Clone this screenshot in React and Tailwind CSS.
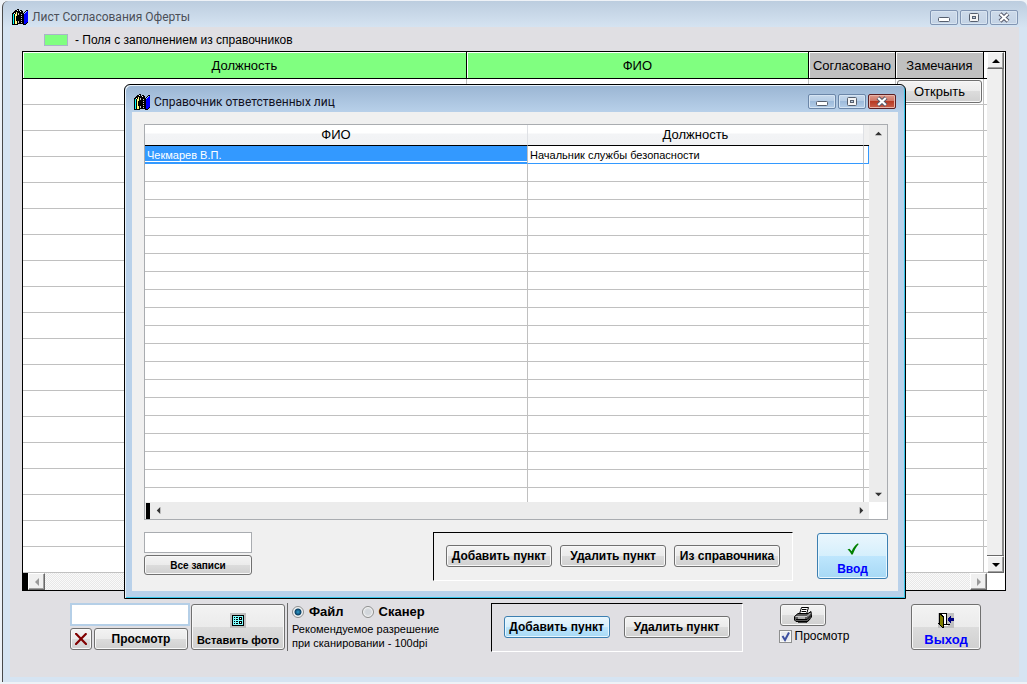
import React from "react";

const FACE =
  "border border-[#707070] rounded-[3px] bg-[linear-gradient(#f3f3f3,#ebebeb_50%,#dcdcdc_50%,#d0d0d0)] shadow-[inset_0_0_0_1px_#f8f8f8]";
const FACE_BLUE =
  "border border-[#3c7fb1] rounded-[3px] bg-[linear-gradient(#eaf6fd,#d5effc_50%,#bee6fd_50%,#a7d9f5)] shadow-[inset_0_0_0_1px_#e8f7ff]";

function Button({ blue, className, children, ...rest }) {
  return (
    <button type="button" className={`flex items-center justify-center whitespace-nowrap ${blue ? FACE_BLUE : FACE} ${className}`} {...rest}>
      {children}
    </button>
  );
}

function BooksIcon() {
  return (
    <svg viewBox="0 0 16 16" className="h-4 w-4 shrink-0" shapeRendering="crispEdges" aria-hidden="true">
      <path fill="#000" d="M0 4h1V3h1V2h1V1h2V0h2v2h1V1h2v1h1v2h1V3h1V2h1V1h2v13h-1v1h-1v1h-3v-1H6v1H0z" />
      <path fill="#00ffff" d="M1 5h1v10H1z" />
      <path fill="#fff" d="M2 4h1v1H2zM5 1h1v1H5zM8 2h1v1H8z" />
      <path fill="#ffff80" d="M3 5h1v10H3zM4 3h1v4H4zM4 12h1v3H4z" />
      <path fill="#c8c8c8" d="M6 4h1v2H6zM6 12h1v2H6zM9 5h1v1H9zM9 7h1v1H9zM9 9h1v1H9zM9 11h1v1H9zM9 13h1v1H9z" />
      <path fill="#0000ff" d="M12 5h1V4h1V3h1v11h-1v1h-2z" />
      <path fill="#0000ff" d="M15 2h1v11h-1z" />
      <path fill="#a0c8ff" d="M12 4h1V3h1V2h1v1h-1v1h-1v1h-1z" />
    </svg>
  );
}

function CaptionButton({ kind, dialog }) {
  const tone =
    kind === "close" && dialog
      ? "border-[#5b1f24] bg-[linear-gradient(#dd9a8c,#cf7565_45%,#b83a24_50%,#c9604c)] shadow-[inset_0_0_0_1px_#e8b5aa]"
      : dialog
        ? "border-[#6b86a8] bg-[linear-gradient(#c7d9ec,#b6cde6_45%,#9ebbdb_50%,#b4cee9)] shadow-[inset_0_0_0_1px_#d5e4f3]"
        : "border-[#8195b3] bg-[linear-gradient(#cddaea,#c3d3e5)] shadow-[inset_0_0_0_1px_#d8e4f0]";
  const names = { min: "Свернуть", max: "Развернуть", close: "Закрыть" };
  return (
    <button type="button" aria-label={names[kind]} className={`flex h-[15px] w-7 items-center justify-center rounded-[2px] border ${tone}`}>
      <svg viewBox="0 0 12 11" className="h-[11px] w-3" aria-hidden="true">
        {kind === "min" && <rect x="0.5" y="5.5" width="11" height="4" rx="1" fill="#fff" stroke="#565f6e" />}
        {kind === "max" && (
          <>
            <rect x="1.5" y="1.5" width="9" height="8" rx="1" fill="#f4f4f4" stroke="#565f6e" />
            <rect x="4.5" y="4.5" width="3" height="2" fill="#b9cade" stroke="#565f6e" />
          </>
        )}
        {kind === "close" && (
          <>
            <path d="M2 1.800l8 7.400M10 1.800l-8 7.400" stroke="#565a6b" strokeWidth="4.200" />
            <path d="M2.200 2l7.600 7M9.800 2l-7.600 7" stroke="#fff" strokeWidth="2.200" />
          </>
        )}
      </svg>
    </button>
  );
}

function Caption({ title, dialog }) {
  return (
    <header className="flex items-center">
      <BooksIcon />
      <h1 className={`ml-1 flex-1 font-[Roboto,'Noto_Sans',sans-serif] text-xs ${dialog ? "text-[#111122]" : "text-[#4c5058]"}`}>{title}</h1>
      <div className="flex gap-0.5">
        <CaptionButton kind="min" dialog={dialog} />
        <CaptionButton kind="max" dialog={dialog} />
        <CaptionButton kind="close" dialog={dialog} />
      </div>
    </header>
  );
}

const ARROWS = {
  up: "M0 6h8L4 2z",
  down: "M0 2h8L4 6z",
  left: "M6 0v8L2 4z",
  right: "M2 0v8l4-4z",
};

function ScrollButton({ dir, classic, muted }) {
  const labels = { up: "Вверх", down: "Вниз", left: "Влево", right: "Вправо" };
  return (
    <button
      type="button"
      aria-label={labels[dir]}
      className={`flex shrink-0 items-center justify-center ${
        classic
          ? "h-[17px] w-[17px] border border-t-white border-l-white border-r-[#696969] border-b-[#696969] bg-[#f0f0f0] shadow-[inset_-1px_-1px_0_#a0a0a0]"
          : "h-4 w-4"
      }`}
    >
      <svg viewBox="0 0 8 8" className={classic ? "h-2 w-2" : "h-[7px] w-[7px]"} aria-hidden="true">
        <path d={ARROWS[dir]} fill={muted ? "#9a9a9a" : classic ? "#000" : "#333"} />
      </svg>
    </button>
  );
}

function SheetTable() {
  const head = "h-[27px] border-b border-r border-black p-0 pt-px text-center font-normal shadow-[inset_1px_1px_0_#fff]";
  const cell = "border-b border-r border-[#c0c0c0] p-0";
  return (
    <section className="border border-black bg-white">
      <div className="flex">
        <table className="flex-1 table-fixed border-separate border-spacing-0 text-[13px]">
          <colgroup>
            <col />
            <col className="w-[35.5%]" />
            <col className="w-[87px]" />
            <col className="w-[88px]" />
            <col className="w-[3px]" />
          </colgroup>
          <thead>
            <tr>
              <th className={`${head} bg-[#80ff80]`}>Должность</th>
              <th className={`${head} bg-[#80ff80]`}>ФИО</th>
              <th className={`${head} bg-[#c0c0c0]`}>Согласовано</th>
              <th className={`${head} bg-[#c0c0c0]`}>Замечания</th>
              <td className="border-b border-black p-0" />
            </tr>
          </thead>
          <tbody>
            {Array.from({ length: 19 }, (_, i) => (
              <tr key={i} className="h-[26px]">
                <td className={cell} />
                <td className={cell} />
                <td className={cell} />
                <td className={cell}>
                  {i === 0 && <Button className="ml-px h-[23px] w-[85px]">Открыть</Button>}
                </td>
                <td className="border-b border-[#c0c0c0] p-0" />
              </tr>
            ))}
          </tbody>
        </table>
        <div className="mr-px flex w-[17px] flex-col bg-[#efefef]">
          <ScrollButton dir="up" classic />
          <div className="flex-1 border-r-2 border-[#8a8a8a]" />
          <div className="h-px bg-[#696969]" />
          <ScrollButton dir="down" classic />
        </div>
      </div>
      <div className="flex h-[17px]">
        <div className="w-[5px] bg-black" />
        <ScrollButton dir="left" classic muted />
        <div className="flex-1 bg-[repeating-conic-gradient(#e8e8e8_0_25%,#fafafa_0_50%)] bg-[length:2px_2px]" />
        <ScrollButton dir="right" classic muted />
        <div className="w-[18px]" />
      </div>
    </section>
  );
}

function DirectoryTable() {
  const head = "h-[21px] border-b border-b-black p-0 text-center font-normal leading-5 bg-[linear-gradient(#ffffff_40%,#f3f4f6_45%,#f1f2f4)]";
  const line = "border-b border-[#c0c0c0] p-0";
  return (
    <section className="border border-[#a9acb0] bg-white">
      <div className="flex">
        <table className="flex-1 table-fixed border-separate border-spacing-0">
          <colgroup>
            <col className="w-[52.9%]" />
            <col />
            <col className="w-[5px]" />
          </colgroup>
          <thead className="text-[13px]">
            <tr>
              <th className={`${head} border-r border-r-[#dfe1e5]`}>ФИО</th>
              <th className={`${head} border-r border-r-[#dfe1e5]`}>Должность</th>
              <td className="border-b border-black bg-[#f0f0f0] p-0" />
            </tr>
          </thead>
          <tbody className="text-[11px] leading-4">
            <tr className="h-[18px]">
              <td className="border-b border-r border-r-[#c0c0c0] border-b-[#3399ff] bg-[#3399ff] p-0 pl-0.5 text-white shadow-[inset_0_-1px_0_#3399ff,inset_0_-2px_0_#fff]">Чекмарев В.П.</td>
              <td className="border-b border-r border-r-[#c0c0c0] border-b-[#3399ff] p-0 pl-0.5">Начальник службы безопасности</td>
              <td className="border-b border-r border-[#3399ff] p-0" />
            </tr>
            {Array.from({ length: 18 }, (_, i) => (
              <tr key={i} className="h-[18px]">
                <td className={`${line} border-r`} />
                <td className={`${line} border-r`} />
                <td className={line} />
              </tr>
            ))}
            <tr className="h-[14px]">
              <td className="border-r border-[#c0c0c0] p-0" />
              <td className="border-r border-[#c0c0c0] p-0" />
              <td className="p-0" />
            </tr>
          </tbody>
        </table>
        <div className="flex w-[18px] flex-col items-center justify-between bg-[#ececec]">
          <ScrollButton dir="up" />
          <ScrollButton dir="down" />
        </div>
      </div>
      <div className="flex h-[17px] items-center bg-[#ececec]">
        <div className="ml-px h-4 w-1 bg-black" />
        <ScrollButton dir="left" />
        <div className="flex-1" />
        <ScrollButton dir="right" />
        <div className="h-full w-[18px] bg-white" />
      </div>
    </section>
  );
}

function Group({ className, children }) {
  return (
    <div className={`flex h-[49px] items-start border border-t-black border-l-black border-r-white border-b-white px-3 pt-3 ${className}`}>
      {children}
    </div>
  );
}

const ITEM = "h-[22px] w-[106px] text-xs font-bold";

function DirectoryDialog() {
  return (
    <div
      role="dialog"
      aria-label="Справочник ответственных лиц"
      className="absolute left-[124px] right-[121px] top-[84px] rounded-t-[6px] border border-black bg-[linear-gradient(#9ab5d3,#b9d1ea_28px)] px-[7px] pb-[7px] shadow-[inset_1px_1px_0_#eaf3fb,inset_-1px_-1px_0_#35c4e8]"
    >
      <div className="flex h-[27px] flex-col justify-center pl-0.5 pr-0.5 pt-1.5">
        <Caption title="Справочник ответственных лиц" dialog />
      </div>
      <div className="bg-[#f0f0f0] pb-2.5 pl-3 pr-2.5 pt-3">
        <DirectoryTable />
        <div className="mt-3 flex items-start">
          <div className="flex w-[108px] flex-col gap-0.5">
            <input type="text" aria-label="Поиск" className="h-[21px] w-full border border-[#a9acb0] bg-white px-1 text-[11px]" />
            <Button className="h-5 w-full text-[10px] font-bold">Все записи</Button>
          </div>
          <div className="flex-1" />
          <Group className="mr-6 gap-2">
            <Button className={ITEM}>Добавить пункт</Button>
            <Button className={ITEM}>Удалить пункт</Button>
            <Button className={ITEM}>Из справочника</Button>
          </Group>
          <Button blue className="mt-px h-[46px] w-[71px] flex-col pt-2 text-xs font-bold leading-4 text-[#0000ff]">
            <svg viewBox="0 0 12 12" className="mb-1.5 h-3 w-3" aria-hidden="true">
              <path d="M0.5 6.5l2-0.8 2.2 2.5C6 5 8 2 11 0.3l0.6 0.9C9 4 7.2 7.500 5.800 11.500H4.300C3.500 9.500 2.200 7.800 0.500 6.500z" fill="#008000" />
            </svg>
            Ввод
          </Button>
        </div>
      </div>
    </div>
  );
}

function FormIcon() {
  return (
    <svg viewBox="0 0 16 15" className="h-[15px] w-4" shapeRendering="crispEdges" aria-hidden="true">
      <path fill="#c0c0c0" d="M0 0h16v15H0z" />
      <path fill="#000" d="M2 2h12v11H2z" />
      <path fill="#80ffff" d="M3 3h10v9H3z" />
      <path fill="#000" d="M4 4h1v1H4zM6 4h2v1H6zM4 6h1v1H4zM6 6h2v1H6zM4 8h1v1H4zM6 8h2v1H6zM4 10h1v1H4zM6 10h2v1H6zM9 4h3v3H9zM9 8h3v3H9z" />
      <path fill="#fff" d="M10 5h1v1h-1zM10 9h1v1h-1z" />
    </svg>
  );
}

function PrinterIcon() {
  return (
    <svg viewBox="0 0 18 16" className="h-4 w-[18px]" aria-hidden="true">
      <path d="M5.500 7L7.500 0.500H14.500L12.500 7z" fill="#fff" stroke="#000" />
      <path d="M8 2.500h4.500M7.500 4.500h4.500" stroke="#000" />
      <path d="M0.500 9.500L4 6.500H14L17 4.500 17.500 10 13.500 14.500H2L0.500 13z" fill="#5a5a5a" stroke="#000" />
      <path d="M1.500 9.500H13L16.500 6" stroke="#c8c8c8" fill="none" />
      <path d="M2 12.500h11l4-4" stroke="#000" fill="none" />
      <path d="M4 11h7" stroke="#fff" />
      <path d="M4 15.200h9l3-3" stroke="#000" fill="none" />
    </svg>
  );
}

function ExitIcon() {
  return (
    <svg viewBox="0 0 16 15" className="h-[15px] w-4" shapeRendering="crispEdges" aria-hidden="true">
      <path fill="#c0c0c0" d="M0 0h16v15H0z" />
      <path fill="#000" d="M1 0h8v11h3v1H6v3H4v-1H3v-1H2v-1H1v-1H0v-1h1z" />
      <path fill="#fff" d="M4 1h4v10H6V3H5V2H4z" />
      <path fill="#808000" d="M2 2h1v1h1v1h1v10H4v-1H3v-1H2z" />
      <path fill="#fff" d="M6 12h4v1H6z" />
      <path fill="#000080" d="M10 5h1V4h1V3h1v2h3v3h-3v2h-1V9h-1V8h-1z" />
    </svg>
  );
}

function Radio({ id, label, defaultChecked }) {
  return (
    <label htmlFor={id} className="flex items-center gap-[5px] text-[13px] font-bold leading-4">
      <input
        id={id}
        type="radio"
        name="source"
        defaultChecked={defaultChecked}
        className="h-3 w-3 appearance-none rounded-full border border-[#8e8f8f] bg-[radial-gradient(#d2d6db_30%,#f4f4f4)] shadow-[inset_0_0_0_1px_#f4f4f4] checked:bg-[radial-gradient(circle_at_50%_50%,#2f9fd0_0,#0b3f63_3px,#eef1f3_4px)]"
      />
      {label}
    </label>
  );
}

function Toolbar() {
  return (
    <footer className="flex items-start pl-[60px] pr-[38px] pt-3">
      <div className="flex flex-col gap-0.5">
        <input type="text" aria-label="Фото" className="h-[23px] w-[120px] border-2 border-[#b5cfe7] bg-white px-1 text-xs outline-none" />
        <div className="flex gap-0.5">
          <Button aria-label="Удалить" className="h-[22px] w-[22px]">
            <svg viewBox="0 0 12 12" className="h-3 w-3 shrink-0" aria-hidden="true">
              <path d="M1 0.800L11 11M10.800 1L1 11" stroke="#800000" strokeWidth="2.200" strokeLinecap="round" />
            </svg>
          </Button>
          <Button className="h-[22px] w-[94px] text-xs font-bold">Просмотр</Button>
        </div>
      </div>
      <Button className="ml-px mt-px h-[46px] w-[94px] flex-col pt-1.5 text-[11px] font-bold leading-4">
        <span className="mb-1">
          <FormIcon />
        </span>
        Вставить фото
      </Button>
      <div className="ml-0.5 h-12 border-l border-[#696969] pl-1">
        <div className="flex gap-[18px] pt-px">
          <Radio id="src-file" label="Файл" defaultChecked />
          <Radio id="src-scan" label="Сканер" />
        </div>
        <p className="pt-0.5 text-[11px] leading-[14px]">
          Рекомендуемое разрешение
          <br />
          при сканировании - 100dpi
        </p>
      </div>
      <div className="min-w-4 flex-[10]" />
      <Group className="gap-3.5">
        <Button blue className={ITEM}>Добавить пункт</Button>
        <Button className={ITEM}>Удалить пункт</Button>
      </Group>
      <div className="min-w-4 flex-[7]" />
      <div className="flex flex-col gap-0.5 pt-px">
        <Button aria-label="Печать" className="ml-px h-[22px] w-[46px]">
          <PrinterIcon />
        </Button>
        <label htmlFor="preview" className="flex items-center gap-[3px] text-xs leading-4">
          <span className="grid">
            <input id="preview" type="checkbox" defaultChecked className="peer h-[13px] w-[13px] appearance-none border border-[#8e8f8f] bg-[#e9ebee] shadow-[inset_0_0_0_1px_#f8f8f8] [grid-area:1/1]" />
            <svg viewBox="0 0 13 13" className="pointer-events-none invisible h-[13px] w-[13px] [grid-area:1/1] peer-checked:visible" aria-hidden="true">
              <path d="M3.500 6l2.500 4L10 2.500" fill="none" stroke="#3c4fa0" strokeWidth="2" />
            </svg>
          </span>
          Просмотр
        </label>
      </div>
      <div className="min-w-4 flex-[12]" />
      <Button className="mt-px h-[46px] w-[70px] flex-col pt-1.5 text-[13px] font-bold leading-4 text-[#0000ff]">
        <span className="mb-1">
          <ExitIcon />
        </span>
        Выход
      </Button>
    </footer>
  );
}

export default function App() {
  return (
    <main className="flex min-h-screen flex-col bg-[#eef2f7] pb-0.5 pl-0.5 pt-px font-['Liberation_Sans',Arial,sans-serif] text-black">
      <div className="flex flex-1 flex-col rounded-t-[6px] border-l border-[#4a4a4a] bg-[linear-gradient(#bccddf,#d6e4f2_27px)] pb-[5px] pl-[7px] pr-2">
        <div className="flex h-[26px] flex-col justify-center pl-0.5 pr-px pt-1.5">
          <Caption title="Лист Согласования Оферты" />
        </div>
        <div className="flex-1 bg-[#e0dfe3]">
          <div className="flex h-6 items-center gap-[7px] pl-[34px] pt-0.5 text-xs">
            <span className="h-3 w-6 border border-[#a9b4c8] bg-[#80ff80]" />
            <span>- Поля с заполнением из справочников</span>
          </div>
          <div className="pl-3 pr-[13px]">
            <SheetTable />
          </div>
          <Toolbar />
        </div>
      </div>
      <DirectoryDialog />
    </main>
  );
}
